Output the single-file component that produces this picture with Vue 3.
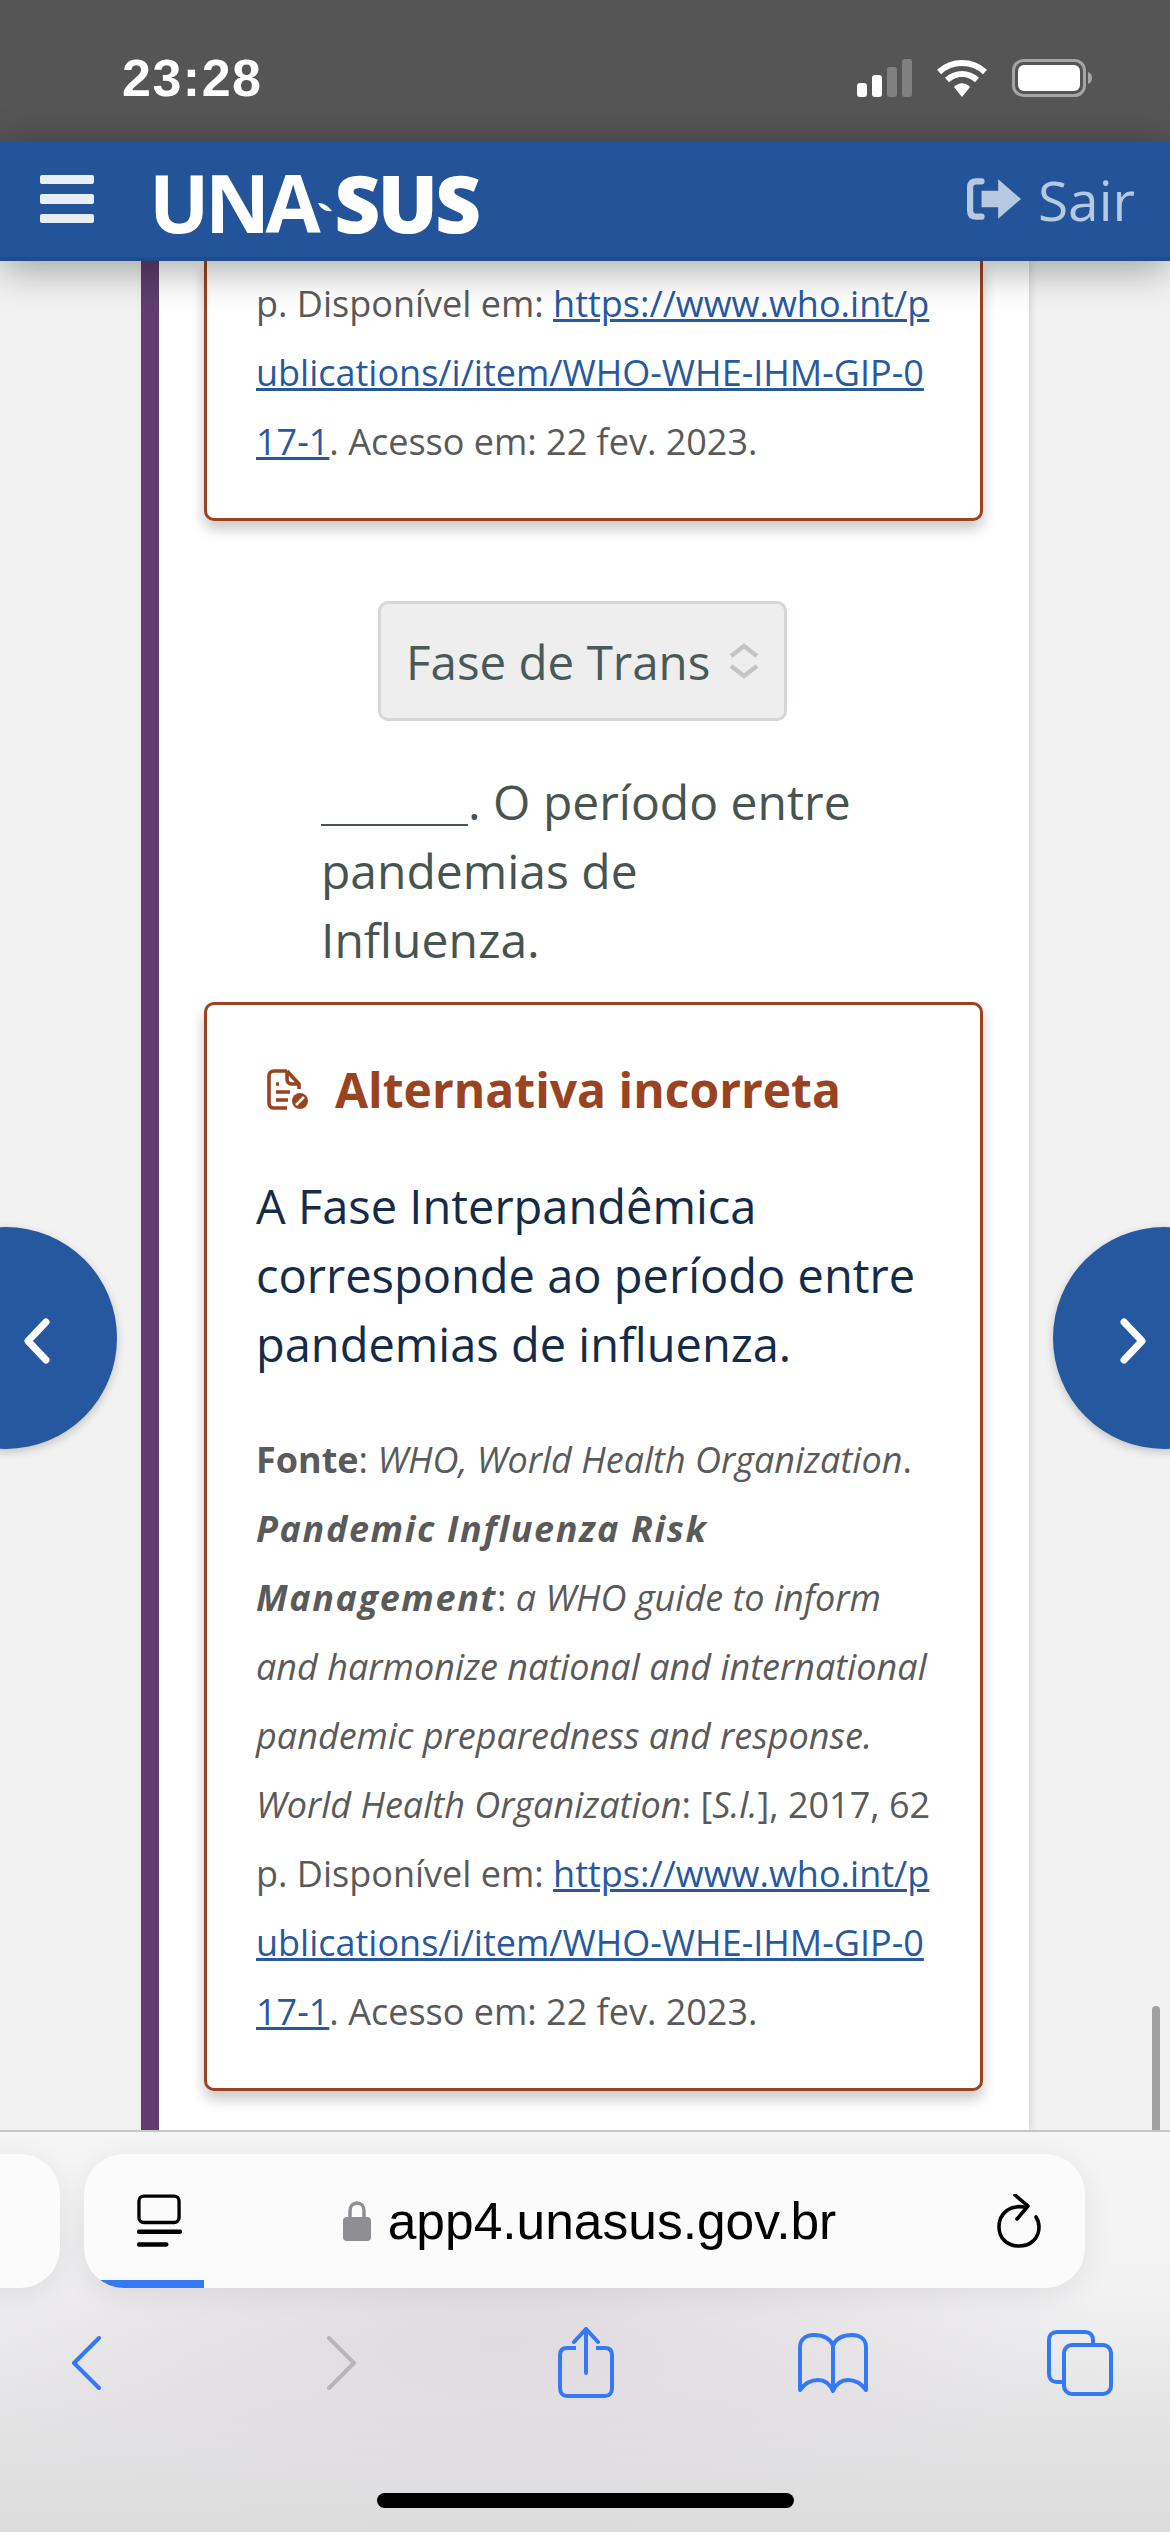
<template>
  <div class="phone">
    <!-- status bar -->
    <div class="status">
      <span class="time">23:28</span>
      <div class="status-icons">
        <div class="signal">
          <i class="on" style="height: 14px"></i>
          <i class="on" style="height: 22px"></i>
          <i style="height: 30px"></i>
          <i style="height: 38px"></i>
        </div>
        <svg class="wifi" viewBox="0 0 50 38">
          <path d="M2 13C15 1 35 1 48 13" fill="none" stroke="#fff" stroke-width="6" />
          <path d="M10 21C19 13 31 13 40 21" fill="none" stroke="#fff" stroke-width="6" />
          <path d="M17 28C22 23 28 23 33 28L25 38Z" fill="#fff" />
        </svg>
        <svg class="battery" viewBox="0 0 80 38">
          <rect x="1.5" y="1.5" width="71" height="35" rx="10" fill="none" stroke="#a5a5a5" stroke-width="3" />
          <rect x="6" y="6" width="62" height="26" rx="6" fill="#fff" />
          <path d="M76 13c3 1 4 3 4 6s-1 5-4 6z" fill="#a5a5a5" />
        </svg>
      </div>
    </div>

    <!-- site header -->
    <header class="topbar">
      <div class="burger"><i></i><i></i><i></i></div>
      <div class="logo">
        <span class="una">UNA</span>
        <svg class="leaf" viewBox="0 0 14 9"><path d="M0 0C6 0 10 3 14 8C8 9 3 6 0 0Z" fill="#fff" /></svg>
        <span class="sus">SUS</span>
      </div>
      <div class="logout">
        <svg class="logout-icon" viewBox="0 0 52 40">
          <path d="M14 3H9C5 3 3 5 3 9V31C3 35 5 37 9 37H14" fill="none" stroke="#b6c9e2" stroke-width="6" stroke-linecap="round" />
          <path d="M14 12H30V1L52 20L30 39V28H14Z" fill="#b6c9e2" />
        </svg>
        <span>Sair</span>
      </div>
    </header>

    <!-- page -->
    <main class="page">
      <section class="card">
        <div class="feedback cut">
          <p class="source">
            p. Disponível em: <a>https://www.who.int/p<br />ublications/i/item/WHO-WHE-IHM-GIP-0<br />17-1</a>. Acesso em: 22 fev. 2023.
          </p>
        </div>

        <div class="select">
          <span>Fase de Trans</span>
          <svg class="updown" viewBox="0 0 32 36">
            <path d="M3 13L16 3L29 13M3 23L16 33L29 23" fill="none" stroke="#c4c4c4" stroke-width="4.5" />
          </svg>
        </div>

        <p class="question"><span class="blank"></span>. O período entre<br />pandemias de<br />Influenza.</p>

        <div class="feedback">
          <h3 class="feedback-title">
            <svg class="doc-icon" viewBox="0 0 44 42">
              <path d="M20 2H7C4 2 2 4 2 7V34C2 37 4 39 7 39H20M20 2L32 15V20M20 2V10C20 13 22 15 25 15H32" fill="none" stroke="#9a4320" stroke-width="3.6" stroke-linejoin="round" />
              <path d="M9 15H12M9 23H23M9 31H21" fill="none" stroke="#9a4320" stroke-width="3.6" />
              <circle cx="33" cy="32" r="8" fill="#9a4320" />
              <path d="M29 36L37 28" stroke="#fff" stroke-width="2.5" />
            </svg>
            <span>Alternativa incorreta</span>
          </h3>
          <p class="answer">A Fase Interpandêmica<br />corresponde ao período entre<br />pandemias de influenza.</p>
          <p class="source">
            <b>Fonte</b>: <em>WHO, World Health Organization</em>.<br />
            <b class="title"><em>Pandemic Influenza Risk<br />Management</em></b>: <em>a WHO guide to inform<br />and harmonize national and international<br />pandemic preparedness and response.<br />World Health Organization</em>: [<em>S.l.</em>], 2017, 62<br />
            p. Disponível em: <a>https://www.who.int/p<br />ublications/i/item/WHO-WHE-IHM-GIP-0<br />17-1</a>. Acesso em: 22 fev. 2023.
          </p>
        </div>
      </section>
    </main>

    <!-- safari bottom bar -->
    <footer class="browser">
      <div class="url-row">
        <div class="prev-tab"></div>
        <div class="url-pill">
          <svg class="tab-icon" viewBox="0 0 46 56">
            <rect x="2" y="2" width="41" height="27" rx="5" fill="none" stroke="#000" stroke-width="3.4" />
            <path d="M2 38.5H44" stroke="#000" stroke-width="4.4" stroke-linecap="round" />
            <path d="M2 51.5H30" stroke="#000" stroke-width="4.4" stroke-linecap="round" />
          </svg>
          <div class="address">
            <svg class="lock" viewBox="0 0 28 40">
              <path d="M7 18V10C7 5 10 2 14 2S21 5 21 10V18" fill="none" stroke="#8e8e93" stroke-width="3.5" />
              <rect y="16" width="28" height="24" rx="4" fill="#8e8e93" />
            </svg>
            <span>app4.unasus.gov.br</span>
          </div>
          <svg class="reload" viewBox="0 0 44 54">
            <path d="M27 13C13 11 2 19 2 33C2 44 10 52 22 52C34 52 42 44 42 33C42 29 41 26 39 23" fill="none" stroke="#000" stroke-width="3.6" stroke-linecap="round" />
            <path d="M18 1L31 12L20 25" fill="none" stroke="#000" stroke-width="3.6" stroke-linecap="round" stroke-linejoin="round" />
          </svg>
          <div class="progress"></div>
        </div>
      </div>
      <nav class="tools">
        <svg class="tool back" viewBox="0 0 31 54"><path d="M28 2L3 27L28 52" fill="none" stroke="#3478f6" stroke-width="4" stroke-linecap="round" stroke-linejoin="round" /></svg>
        <svg class="tool forward" viewBox="0 0 31 54"><path d="M3 2L28 27L3 52" fill="none" stroke="#b6b6b8" stroke-width="4" stroke-linecap="round" stroke-linejoin="round" /></svg>
        <svg class="tool share" viewBox="0 0 56 71">
          <path d="M18 21H9C5 21 2 23 2 28V61C2 66 5 69 9 69H47C51 69 54 66 54 61V28C54 23 51 21 47 21H38" fill="none" stroke="#3478f6" stroke-width="4" />
          <path d="M28 46V3M16 15L28 2L40 15" fill="none" stroke="#3478f6" stroke-width="4" stroke-linecap="round" />
        </svg>
        <svg class="tool book" viewBox="0 0 70 60">
          <path d="M35 12C31 4 24 2 16 2C7 2 2 7 2 14V57C7 50 13 47 20 47C27 47 32 51 35 58C38 51 43 47 50 47C57 47 63 50 68 57V14C68 7 63 2 54 2C46 2 39 4 35 12ZM35 12V58" fill="none" stroke="#3478f6" stroke-width="4" stroke-linejoin="round" />
        </svg>
        <svg class="tool tabs" viewBox="0 0 66 66">
          <path d="M15 52H10C5 52 2 49 2 44V10C2 5 5 2 10 2H38C43 2 46 5 46 10V15" fill="none" stroke="#3478f6" stroke-width="4" />
          <rect x="17" y="15" width="47" height="49" rx="8" fill="none" stroke="#3478f6" stroke-width="4" />
        </svg>
      </nav>
      <div class="home-bar"></div>
    </footer>

    <!-- overlays -->
    <button class="side-nav left">
      <svg viewBox="0 0 26 46"><path d="M22 4L4 23L22 42" fill="none" stroke="#fff" stroke-width="7" stroke-linecap="round" stroke-linejoin="round" /></svg>
    </button>
    <button class="side-nav right">
      <svg viewBox="0 0 26 46"><path d="M4 4L22 23L4 42" fill="none" stroke="#fff" stroke-width="7" stroke-linecap="round" stroke-linejoin="round" /></svg>
    </button>
    <div class="scroll-thumb"></div>
  </div>
</template>

<script setup>
</script>

<style>
html,
body {
  margin: 0;
  background: #f2f2f2;
}
</style>

<style scoped>
.phone {
  position: relative;
  width: 1170px;
  height: 2532px;
  overflow: hidden;
  display: flex;
  flex-direction: column;
  background: #f2f2f2;
  font-family: "Open Sans", "Noto Sans", sans-serif;
}

.status {
  height: 141px;
  flex: none;
  background: #555555;
  display: flex;
  align-items: center;
  justify-content: space-between;
  padding: 14px 78px 0 122px;
  box-sizing: border-box;
}
.time {
  font: 700 52px "Liberation Sans", sans-serif;
  letter-spacing: 1.5px;
  color: #fff;
}
.status-icons {
  display: flex;
  align-items: center;
  gap: 25px;
}
.signal {
  display: flex;
  align-items: flex-end;
  gap: 5px;
  height: 38px;
}
.signal i {
  width: 10px;
  border-radius: 3px;
  background: #808080;
}
.signal i.on {
  background: #fff;
}
.wifi {
  width: 50px;
  height: 38px;
}
.battery {
  width: 80px;
  height: 38px;
}

.topbar {
  height: 120px;
  flex: none;
  box-sizing: border-box;
  position: relative;
  z-index: 2;
  background: #235398;
  border-bottom: 4px solid #1f4c8c;
  box-shadow: 0 8px 40px rgba(0, 0, 0, 0.35);
  display: flex;
  align-items: center;
  padding: 0 35px 0 40px;
}
.burger {
  display: flex;
  flex-direction: column;
  gap: 10px;
  width: 54px;
}
.burger i {
  height: 9.5px;
  border-radius: 2px;
  background: #e8eef6;
}
.logo {
  display: flex;
  align-items: center;
  margin: 5px 0 0 55px;
  color: #fff;
  font-size: 80px;
  line-height: 1;
}
.una {
  font-weight: 700;
  letter-spacing: -4.5px;
}
.sus {
  font-weight: 800;
  letter-spacing: -3px;
}
.leaf {
  width: 14px;
  height: 9px;
  margin: 12px 2px 0 2px;
}
.logout {
  margin-left: auto;
  display: flex;
  align-items: center;
  gap: 17px;
  color: #b6c9e2;
  font-size: 55px;
}
.logout-icon {
  width: 54px;
  height: 42px;
}

.page {
  flex: 1;
  min-height: 0;
  overflow: hidden;
}
.card {
  width: 888px;
  height: 100%;
  margin-left: 141px;
  box-sizing: border-box;
  background: #fff;
  border-left: 18px solid #5f3d6e;
  box-shadow: 2px 0 6px rgba(0, 0, 0, 0.12);
  padding: 0 46px 0 45px;
}
.feedback {
  border: 3px solid #9a4320;
  border-radius: 10px;
  background: #fff;
  padding: 50px 40px 42px 49px;
  box-shadow: 0 8px 14px rgba(0, 0, 0, 0.22);
}
.feedback.cut {
  border-top: none;
  border-radius: 0 0 10px 10px;
  padding-top: 8px;
  padding-bottom: 42px;
}
.source {
  margin: 0;
  font-size: 36px;
  line-height: 69px;
  color: #5a5a5a;
  white-space: nowrap;
}
.source a {
  color: #28599f;
  text-decoration: underline;
}
.source .title {
  letter-spacing: 1.6px;
}
.select {
  width: 409px;
  height: 120px;
  box-sizing: border-box;
  margin: 80px 0 46px 174px;
  display: flex;
  align-items: center;
  justify-content: space-between;
  padding: 0 24px 0 25px;
  background: #eeeeee;
  border: 3px solid #d6d6d2;
  border-radius: 10px;
  color: #4a5a58;
  font-size: 47.5px;
}
.updown {
  width: 32px;
  height: 36px;
}
.question {
  margin: 0 0 28px 117px;
  font-size: 48px;
  line-height: 69px;
  color: #47544f;
}
.blank {
  display: inline-block;
  width: 147px;
  border-bottom: 2.5px solid #47544f;
  vertical-align: -6px;
}
.feedback-title {
  display: flex;
  align-items: center;
  gap: 24px;
  margin: 0 0 48px 11px;
  font-size: 48px;
  line-height: 69px;
  font-weight: 700;
  color: #9a4320;
}
.doc-icon {
  width: 44px;
  height: 42px;
}
.answer {
  margin: 0 0 46px;
  font-size: 47px;
  line-height: 69px;
  color: #142c47;
}

.browser {
  position: relative;
  height: 402px;
  flex: none;
  box-sizing: border-box;
  border-top: 2px solid #c6c6c6;
  z-index: 1;
  background:
    radial-gradient(ellipse 620px 190px at 500px 210px, #e0dae1 0%, rgba(224, 218, 225, 0) 100%),
    linear-gradient(#f5f5f5 0%, #f2f2f3 40%, #e4e4e5 70%, #dcdcdc 100%);
}
.url-row {
  display: flex;
  gap: 24px;
  margin: 22px 0 0 -200px;
  height: 134px;
}
.prev-tab {
  width: 260px;
  flex: none;
  border-radius: 40px;
  background: #fbfbfb;
  box-shadow: 0 6px 30px rgba(0, 0, 0, 0.08);
}
.url-pill {
  position: relative;
  width: 1001px;
  flex: none;
  box-sizing: border-box;
  border-radius: 40px;
  overflow: hidden;
  background: #fbfbfb;
  box-shadow: 0 6px 30px rgba(0, 0, 0, 0.08);
  display: flex;
  align-items: center;
  padding: 0 44px 0 53px;
  justify-content: space-between;
}
.tab-icon {
  width: 45px;
  height: 55px;
}
.address {
  display: flex;
  align-items: center;
  gap: 17px;
  color: #000;
  font: 400 51.5px "Liberation Sans", sans-serif;
}
.lock {
  width: 28px;
  height: 40px;
}
.reload {
  width: 44px;
  height: 54px;
}
.progress {
  position: absolute;
  left: 0;
  bottom: 0;
  width: 120px;
  height: 8px;
  background: #3478f6;
}
.tools {
  display: flex;
  align-items: center;
  height: 71px;
  margin-top: 39px;
  position: relative;
}
.tool {
  flex: none;
}
.back {
  width: 31px;
  height: 54px;
  margin-left: 71px;
}
.forward {
  width: 31px;
  height: 54px;
  margin-left: 224px;
}
.share {
  width: 56px;
  height: 71px;
  margin-left: 201px;
}
.book {
  width: 70px;
  height: 60px;
  margin-left: 184px;
}
.tabs {
  width: 66px;
  height: 66px;
  margin-left: 179px;
}
.home-bar {
  position: absolute;
  left: 377px;
  top: 361px;
  width: 417px;
  height: 15px;
  border-radius: 8px;
  background: #000;
}

.side-nav {
  position: absolute;
  top: 1227px;
  width: 222px;
  height: 222px;
  padding: 0;
  border: none;
  border-radius: 50%;
  background: #26589f;
  box-shadow: 0 3px 10px rgba(0, 0, 0, 0.2);
  display: flex;
  align-items: center;
  z-index: 3;
}
.side-nav svg {
  width: 26px;
  height: 46px;
  margin-top: 5px;
}
.side-nav.left {
  left: -105px;
  justify-content: flex-end;
  padding-right: 67px;
  box-sizing: border-box;
}
.side-nav.right {
  left: 1053px;
  justify-content: flex-start;
  padding-left: 67px;
  box-sizing: border-box;
}
.scroll-thumb {
  position: absolute;
  left: 1152px;
  top: 2006px;
  width: 8px;
  height: 124px;
  border-radius: 4px 4px 0 0;
  background: #a0a0a0;
}
</style>
